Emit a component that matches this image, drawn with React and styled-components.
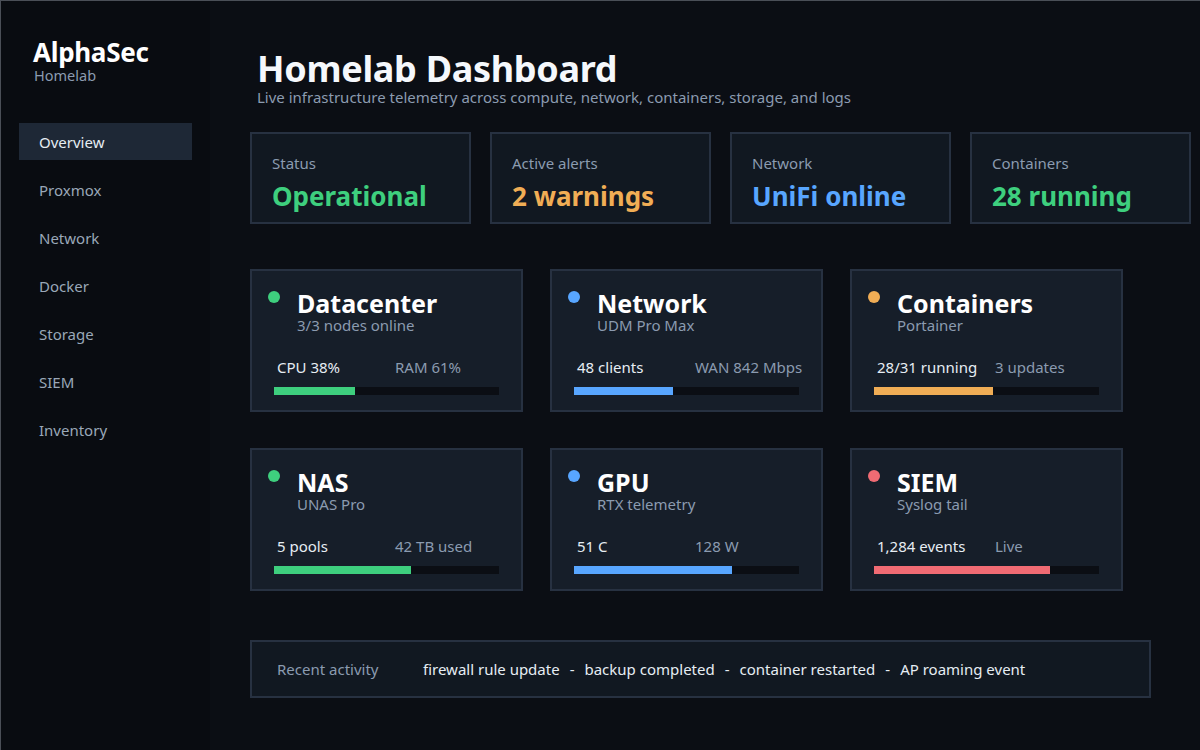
import React from 'react'
import styled, { createGlobalStyle } from 'styled-components'

const GlobalStyle = createGlobalStyle`
  * { box-sizing: border-box; }
  html, body { margin: 0; padding: 0; background: #0b0e14; }
  body { font-family: "Noto Sans", "Open Sans", sans-serif; }
`

const colors = {
  green: '#3ecf7e',
  orange: '#f0ad55',
  blue: '#58a6ff',
  red: '#f06b73',
}

const nav = ['Overview', 'Proxmox', 'Network', 'Docker', 'Storage', 'SIEM', 'Inventory']

const stats = [
  { label: 'Status', value: 'Operational', color: colors.green },
  { label: 'Active alerts', value: '2 warnings', color: colors.orange },
  { label: 'Network', value: 'UniFi online', color: colors.blue },
  { label: 'Containers', value: '28 running', color: colors.green },
]

const services = [
  { title: 'Datacenter', sub: '3/3 nodes online', left: 'CPU 38%', right: 'RAM 61%', pct: 36, color: colors.green },
  { title: 'Network', sub: 'UDM Pro Max', left: '48 clients', right: 'WAN 842 Mbps', pct: 44, color: colors.blue },
  { title: 'Containers', sub: 'Portainer', left: '28/31 running', right: '3 updates', pct: 53, color: colors.orange },
  { title: 'NAS', sub: 'UNAS Pro', left: '5 pools', right: '42 TB used', pct: 61, color: colors.green },
  { title: 'GPU', sub: 'RTX telemetry', left: '51 C', right: '128 W', pct: 70, color: colors.blue },
  { title: 'SIEM', sub: 'Syslog tail', left: '1,284 events', right: 'Live', pct: 78, color: colors.red },
]

const activity = ['firewall rule update', 'backup completed', 'container restarted', 'AP roaming event']

export default function App() {
  return (
    <Shell>
      <GlobalStyle />
      <Sidebar>
        <Brand>
          <h1>AlphaSec</h1>
          <span>Homelab</span>
        </Brand>
        <Nav>
          {nav.map((n, i) => (
            <NavItem key={n} $active={i === 0}>{n}</NavItem>
          ))}
        </Nav>
      </Sidebar>
      <Main>
        <Header>
          <Title>Homelab Dashboard</Title>
          <Subtitle>Live infrastructure telemetry across compute, network, containers, storage, and logs</Subtitle>
        </Header>
        <StatGrid>
          {stats.map(s => (
            <StatCard key={s.label}>
              <StatLabel>{s.label}</StatLabel>
              <StatValue $color={s.color}>{s.value}</StatValue>
            </StatCard>
          ))}
        </StatGrid>
        <CardGrid>
          {services.map(s => (
            <Card key={s.title}>
              <CardHead>
                <Dot $color={s.color} />
                <div>
                  <CardTitle>{s.title}</CardTitle>
                  <CardSub>{s.sub}</CardSub>
                </div>
              </CardHead>
              <Metrics>
                <span>{s.left}</span>
                <span>{s.right}</span>
              </Metrics>
              <Bar>
                <Fill $color={s.color} style={{ width: `${s.pct}%` }} />
              </Bar>
            </Card>
          ))}
        </CardGrid>
        <Activity>
          <ActivityLabel>Recent activity</ActivityLabel>
          <ActivityList>
            {activity.map((a, i) => (
              <React.Fragment key={a}>
                {i > 0 && <Sep>-</Sep>}
                <span>{a}</span>
              </React.Fragment>
            ))}
          </ActivityList>
        </Activity>
      </Main>
    </Shell>
  )
}

const Shell = styled.div`
  display: flex;
  width: 1200px;
  height: 750px;
  border-top: 1px solid #4a4f57;
  border-left: 1px solid #4a4f57;
  background: #0b0e14;
  overflow: hidden;
`

const Sidebar = styled.aside`
  width: 209px;
  flex-shrink: 0;
  background: #090c11;
  padding: 36px 18px 0 18px;
`

const Brand = styled.div`
  padding-left: 14px;
  h1 {
    margin: 0;
    color: #ffffff;
    font-size: 26px;
    font-weight: 700;
    line-height: 31px;
    letter-spacing: -0.3px;
  }
  span {
    display: block;
    color: #8b9bb0;
    font-size: 14.5px;
    line-height: 15px;
    padding-left: 1px;
  }
`

const Nav = styled.nav`
  display: flex;
  flex-direction: column;
  gap: 11px;
  margin-top: 40px;
`

const NavItem = styled.div`
  height: 37px;
  display: flex;
  align-items: center;
  padding-left: 20px;
  font-size: 15px;
  color: ${p => (p.$active ? '#e6edf3' : '#9aa8b8')};
  background: ${p => (p.$active ? '#1e2836' : 'transparent')};
`

const Main = styled.main`
  flex: 1;
  padding: 46px 0 0 40px;
`

const Header = styled.header`
  padding-left: 7px;
`

const Title = styled.h2`
  margin: 0;
  color: #f5f8fc;
  font-size: 36px;
  font-weight: 700;
  line-height: 44px;
  letter-spacing: -0.3px;
`

const Subtitle = styled.p`
  margin: -4px 0 0 0;
  color: #8b9bb0;
  font-size: 15px;
  line-height: 20px;
`

const StatGrid = styled.section`
  display: grid;
  grid-template-columns: repeat(4, 221px);
  gap: 19px;
  margin-top: 25px;
`

const StatCard = styled.div`
  height: 92px;
  background: #111821;
  border: 2px solid #273141;
  padding: 19px 0 0 20px;
`

const StatLabel = styled.div`
  color: #8b9bb0;
  font-size: 15px;
  line-height: 20px;
`

const StatValue = styled.div`
  color: ${p => p.$color};
  font-size: 26px;
  font-weight: 700;
  line-height: 32px;
  margin-top: 7px;
`

const CardGrid = styled.section`
  display: grid;
  grid-template-columns: repeat(3, 273px);
  column-gap: 27px;
  row-gap: 36px;
  margin-top: 45px;
`

const Card = styled.div`
  height: 143px;
  background: #161e29;
  border: 2px solid #273141;
  padding: 18px 22px 0 22px;
`

const CardHead = styled.div`
  display: flex;
  gap: 17px;
  margin-left: -6px;
`

const Dot = styled.span`
  width: 12px;
  height: 12px;
  border-radius: 50%;
  background: ${p => p.$color};
  margin-top: 2px;
  flex-shrink: 0;
`

const CardTitle = styled.div`
  color: #ffffff;
  font-size: 25px;
  font-weight: 700;
  line-height: 28px;
`

const CardSub = styled.div`
  color: #8b9bb0;
  font-size: 15px;
  line-height: 17px;
`

const Metrics = styled.div`
  display: grid;
  grid-template-columns: 118px auto;
  margin-top: 23px;
  padding-left: 3px;
  font-size: 15px;
  line-height: 20px;
  white-space: nowrap;
  span:first-child { color: #e6edf3; }
  span:last-child { color: #8b9bb0; }
`

const Bar = styled.div`
  height: 8px;
  margin-top: 10px;
  background: #0b0e14;
`

const Fill = styled.div`
  height: 100%;
  background: ${p => p.$color};
`

const Activity = styled.section`
  width: 901px;
  height: 58px;
  margin-top: 49px;
  display: flex;
  align-items: center;
  background: #111821;
  border: 2px solid #273141;
  padding-left: 25px;
  font-size: 15px;
`

const ActivityLabel = styled.span`
  color: #8b9bb0;
  width: 146px;
  flex-shrink: 0;
`

const ActivityList = styled.div`
  display: flex;
  gap: 10px;
  color: #e6edf3;
  white-space: nowrap;
`

const Sep = styled.span`
  color: #e6edf3;
`
